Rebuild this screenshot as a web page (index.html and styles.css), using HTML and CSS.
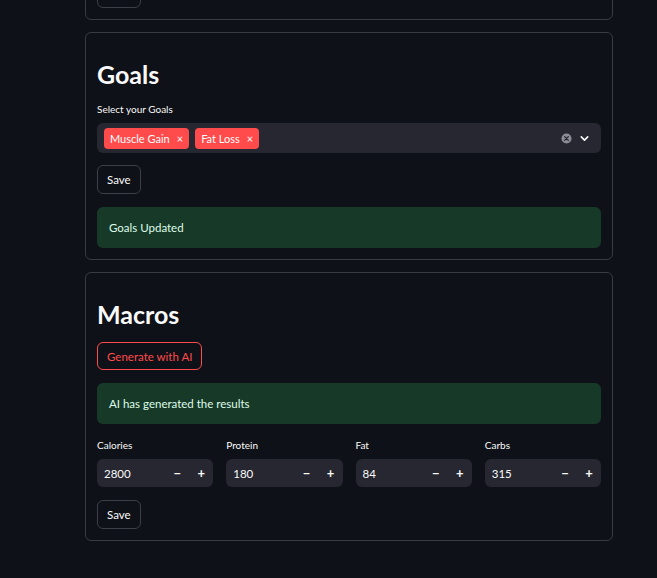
FILE: index.html
```html
<!DOCTYPE html>
<html>
<head>
<meta charset="utf-8">
<link rel="stylesheet" href="styles.css">
</head>
<body>
<main class="page">
  <section class="card">
    <button class="btn btn-first">Save</button>
  </section>

  <section class="card">
    <h3 class="title">Goals</h3>
    <label class="label">Select your Goals</label>
    <div class="multiselect">
      <div class="tags">
        <span class="tag">Muscle Gain <span class="x">×</span></span>
        <span class="tag">Fat Loss <span class="x">×</span></span>
      </div>
      <div class="ms-icons">
        <svg class="clear" width="11" height="11" viewBox="0 0 12 12"><circle cx="6" cy="6" r="5.5" fill="#8b8c95"/><path d="M4 4l4 4M8 4l-4 4" stroke="#262730" stroke-width="1.4" stroke-linecap="round"/></svg>
        <svg class="chev" width="11" height="11" viewBox="0 0 12 12"><path d="M2.5 4.2L6 7.7l3.5-3.5" fill="none" stroke="#fafafa" stroke-width="1.8" stroke-linecap="round" stroke-linejoin="round"/></svg>
      </div>
    </div>
    <button class="btn">Save</button>
    <div class="alert">Goals Updated</div>
  </section>

  <section class="card">
    <h3 class="title">Macros</h3>
    <button class="btn btn-primary">Generate with AI</button>
    <div class="alert">AI has generated the results</div>
    <div class="grid">
      <div class="field">
        <label class="label">Calories</label>
        <div class="num"><span class="val">2800</span><span class="step">−</span><span class="step">+</span></div>
      </div>
      <div class="field">
        <label class="label">Protein</label>
        <div class="num"><span class="val">180</span><span class="step">−</span><span class="step">+</span></div>
      </div>
      <div class="field">
        <label class="label">Fat</label>
        <div class="num"><span class="val">84</span><span class="step">−</span><span class="step">+</span></div>
      </div>
      <div class="field">
        <label class="label">Carbs</label>
        <div class="num"><span class="val">315</span><span class="step">−</span><span class="step">+</span></div>
      </div>
    </div>
    <button class="btn btn-last">Save</button>
  </section>
</main>
</body>
</html>
```

FILE: styles.css
```css
* { box-sizing: border-box; }
html, body {
  margin: 0;
  padding: 0;
  background: #0e1117;
  height: 100%;
  overflow: hidden;
}
body {
  font-family: "Lato", "Source Sans Pro", sans-serif;
  color: #fafafa;
  font-size: 11.5px;
}
.page {
  width: 528px;
  margin-left: 85px;
  margin-top: -33px;
  display: flex;
  flex-direction: column;
  gap: 12px;
}
.card {
  border: 1px solid #393b43;
  border-radius: 6px;
  padding: 11px 11px 11px 11px;
  display: flex;
  flex-direction: column;
  align-items: flex-start;
}
.btn-first { margin-top: 0 !important; }
.title {
  margin: 12px 0 0;
  font-size: 25px;
  font-weight: 700;
  line-height: 36px;
}
.label {
  font-size: 10px;
  line-height: 14px;
  margin-top: 10px;
  margin-bottom: 7px;
  display: block;
}
.multiselect {
  width: 100%;
  height: 30px;
  background: #262730;
  border-radius: 6px;
  display: flex;
  align-items: center;
  justify-content: space-between;
  padding: 0 11px 0 7px;
}
.tags { display: flex; gap: 6px; }
.tag {
  background: #ff4b4b;
  color: #fff;
  border-radius: 4px;
  height: 21px;
  padding: 0 6px 0 6px;
  display: inline-flex;
  align-items: center;
  font-size: 11px;
  gap: 7px;
}
.tag .x { font-size: 11px; }
.ms-icons { display: flex; align-items: center; gap: 7px; }
.btn {
  font-family: inherit;
  background: #0e1117;
  color: #fafafa;
  border: 1px solid #3d3f48;
  border-radius: 6px;
  font-size: 11.5px;
  height: 29px;
  padding: 0 9px;
  margin-top: 12px;
  cursor: pointer;
}
.btn-primary {
  color: #ff4b4b;
  border-color: #ff4b4b;
  height: 28px;
  margin-top: 10px;
}
.btn-last { margin-top: 13px; }
.alert {
  width: 100%;
  background: #173928;
  color: #dffde9;
  border-radius: 6px;
  height: 41px;
  padding: 0 12px;
  display: flex;
  align-items: center;
  margin-top: 13px;
  font-size: 11.5px;
}
.grid {
  width: 100%;
  display: grid;
  grid-template-columns: repeat(4, 1fr);
  gap: 13px;
  margin-top: 4px;
}
.field .label { margin-top: 10px; margin-bottom: 7px; }
.num {
  height: 28px;
  background: #262730;
  border-radius: 6px;
  display: flex;
  align-items: center;
  padding-left: 7px;
}
.val { flex: 1; font-size: 11.5px; }
.step {
  width: 24px;
  text-align: center;
  font-weight: 700;
  font-size: 13px;
}
```
